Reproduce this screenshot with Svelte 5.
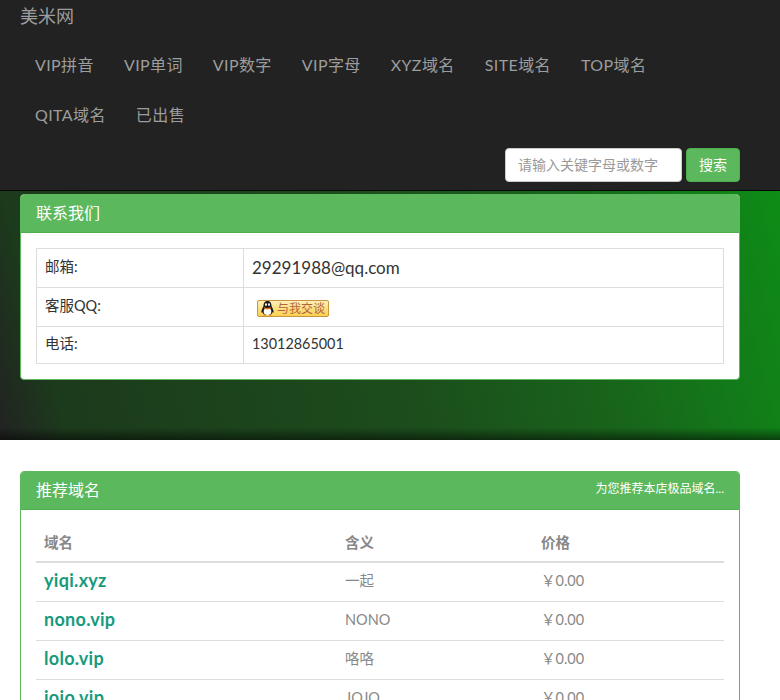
<script>
	const links = ['VIP拼音', 'VIP单词', 'VIP数字', 'VIP字母', 'XYZ域名', 'SITE域名', 'TOP域名', 'QITA域名', '已出售'];
	const domains = [
		{ name: 'yiqi.xyz', meaning: '一起', price: '0.00' },
		{ name: 'nono.vip', meaning: 'NONO', price: '0.00' },
		{ name: 'lolo.vip', meaning: '咯咯', price: '0.00' },
		{ name: 'jojo.vip', meaning: 'JOJO', price: '0.00' }
	];
</script>

<div class="page">
	<nav class="navbar">
		<a class="brand" href="#top">美米网</a>
		<ul class="links">
			{#each links as link}
				<li><a href="#top">{link}</a></li>
			{/each}
		</ul>
		<form class="search">
			<input type="text" placeholder="请输入关键字母或数字" />
			<button type="button">搜索</button>
		</form>
	</nav>

	<section class="banner">
		<div class="panel">
			<div class="panel-heading">
				<h3>联系我们</h3>
			</div>
			<div class="panel-body">
				<table class="contact">
					<tbody>
						<tr>
							<td class="label">邮箱:</td>
							<td class="email">29291988@qq.com</td>
						</tr>
						<tr>
							<td class="label">客服QQ:</td>
							<td>
								<span class="qq-badge">
									<svg width="19" height="17" viewBox="0 0 19 17">
										<path d="M9.500 1C6.500 1 5.500 3.200 5.500 6 4.600 8 3.400 10 3.400 12c0 1 .6 1 1.200 .3 .4 1.300 1.400 2.200 2.400 2.700h5c1-.5 2-1.400 2.400-2.700 .6 .7 1.200 .7 1.200-.3 0-2-1.200-4-2.100-6 0-2.800-1-5-4-5z" fill="#1d1a17" />
										<ellipse cx="9.500" cy="11.500" rx="3.800" ry="3.600" fill="#fff" />
										<ellipse cx="8" cy="4.600" rx="1" ry="1.400" fill="#fff" />
										<ellipse cx="11" cy="4.600" rx="1" ry="1.400" fill="#fff" />
										<path d="M6 7.200c2 1 5 1 7 0l-.3 1.600c-2 .8-4.400 .8-6.400 0z" fill="#e8751a" />
										<path d="M5 15c1-1 3-.8 3.500 .8H5.500zM14 15c-1-1-3-.8-3.500 .8h3z" fill="#e8921a" />
									</svg>
									<span>与我交谈</span>
								</span>
							</td>
						</tr>
						<tr class="last">
							<td class="label">电话:</td>
							<td class="phone">13012865001</td>
						</tr>
					</tbody>
				</table>
			</div>
		</div>
	</section>

	<section class="recommend">
		<div class="panel">
			<div class="panel-heading split">
				<h3>推荐域名</h3>
				<span class="tagline">为您推荐本店极品域名...</span>
			</div>
			<div class="panel-body">
				<table class="domains">
					<colgroup>
						<col class="col-name" />
						<col class="col-meaning" />
						<col />
					</colgroup>
					<thead>
						<tr>
							<th>域名</th>
							<th>含义</th>
							<th>价格</th>
						</tr>
					</thead>
					<tbody>
						{#each domains as d}
							<tr>
								<td><a class="domain" href="#top">{d.name}</a></td>
								<td>{d.meaning}</td>
								<td>￥{d.price}</td>
							</tr>
						{/each}
					</tbody>
				</table>
			</div>
		</div>
	</section>
</div>

<style>
	:global(html),
	:global(body) {
		margin: 0;
		height: 700px;
		overflow: hidden;
		background: #fff;
	}

	.page {
		font-family: Lato, 'Noto Sans CJK SC', sans-serif;
		font-size: 14.5px;
		line-height: 20px;
		color: #333;
		height: 700px;
		overflow: hidden;
	}

	a {
		text-decoration: none;
	}

	.navbar {
		background: #222;
		border-bottom: 1px solid #080808;
		height: 190px;
		box-sizing: content-box;
		display: flex;
		flex-direction: column;
	}

	.brand {
		color: #9d9d9d;
		font-size: 18px;
		line-height: 32px;
		padding-left: 20px;
	}

	.links {
		list-style: none;
		margin: 0;
		padding: 8px 0 0 20px;
		display: flex;
		flex-wrap: wrap;
		width: 680px;
	}

	.links a {
		display: block;
		color: #9d9d9d;
		font-size: 16px;
		line-height: 20px;
		letter-spacing: 0.4px;
		padding: 15px;
	}

	.search {
		display: flex;
		justify-content: flex-end;
		gap: 4px;
		padding: 8px 40px 0 0;
	}

	.search input {
		width: 177px;
		height: 34px;
		box-sizing: border-box;
		border: 1px solid #ccc;
		border-radius: 4px;
		padding: 4px 12px 6px;
		font: inherit;
		font-size: 14px;
		outline: none;
	}

	.search input::placeholder {
		color: #999;
	}

	.search button {
		width: 54px;
		height: 34px;
		border: 1px solid #4cae4c;
		border-radius: 4px;
		background: #5cb85c;
		color: #fff;
		font: inherit;
		font-size: 14px;
	}

	.banner {
		height: 249px;
		padding: 3px 40px 0 20px;
		box-sizing: border-box;
		background:
			linear-gradient(to bottom, rgba(0, 0, 0, 0) 95%, rgba(0, 0, 0, 0.5) 100%),
			linear-gradient(75deg, #222 0%, #1c3a1c 8%, #1c4d1c 50%, #18661b 75%, #0e8c17 100%);
	}

	.recommend {
		padding: 31px 40px 0 20px;
	}

	.panel {
		background: #fff;
		border: 1px solid #5cb85c;
		border-radius: 4px;
		overflow: hidden;
	}

	.panel-heading {
		background: #5cb85c;
		color: #fff;
		height: 38px;
		padding: 0 15px 2px;
		display: flex;
		align-items: center;
		box-sizing: border-box;
		border-bottom: 1px solid #4cae4c;
	}

	.panel-heading.split {
		justify-content: space-between;
	}

	h3 {
		margin: 0;
		font-size: 16px;
		font-weight: 400;
	}

	.tagline {
		font-size: 12px;
		margin-top: -1px;
	}

	.panel-body {
		padding: 15px;
	}

	table {
		border-collapse: collapse;
		border-spacing: 0;
		width: 100%;
		table-layout: fixed;
	}

	.contact td {
		border: 1px solid #ddd;
		padding: 6px 8px 8px;
		height: 39px;
		box-sizing: border-box;
	}

	.contact .last td {
		height: 37px;
	}

	.contact .label {
		width: 207px;
		color: #333;
	}

	.contact .email {
		font-size: 17px;
		padding-top: 7px;
		padding-bottom: 7px;
	}

	.contact .phone {
		font-size: 14.4px;
	}

	.qq-badge {
		display: inline-flex;
		align-items: center;
		margin: 5px 0 0 5px;
		width: 72px;
		height: 17px;
		box-sizing: border-box;
		border: 1px solid #c8963c;
		border-radius: 2px;
		background: linear-gradient(to bottom, #fcefb8, #fdd050);
		color: #b0653f;
		font-size: 12px;
		line-height: 15px;
		vertical-align: top;
	}

	.qq-badge svg {
		flex: none;
	}

	.col-name {
		width: 301px;
	}

	.col-meaning {
		width: 196px;
	}

	.domains th {
		text-align: left;
		color: #888;
		font-size: 14.5px;
		font-weight: 700;
		padding: 8px;
		height: 37px;
		box-sizing: border-box;
		border-bottom: 2px solid #ddd;
	}

	.domains td {
		color: #888;
		padding: 6px 8px 8px;
		height: 39px;
		box-sizing: border-box;
		border-bottom: 1px solid #ddd;
	}

	.domain {
		color: #179a7c;
		font-size: 18px;
		font-weight: 700;
		letter-spacing: 0.3px;
	}
</style>
